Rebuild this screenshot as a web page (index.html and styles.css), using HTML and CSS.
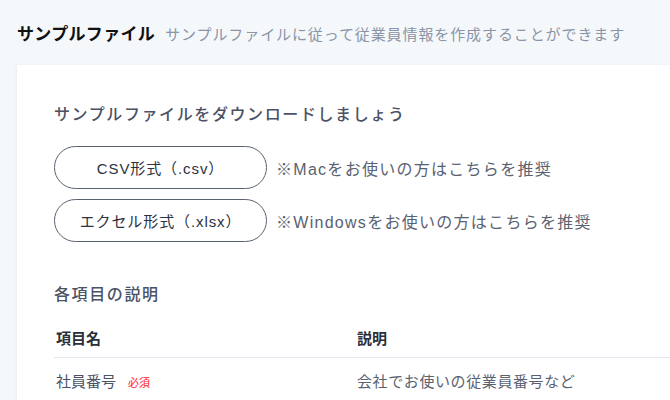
FILE: index.html
```html
<!DOCTYPE html>
<html lang="ja">
<head>
<meta charset="utf-8">
<link rel="stylesheet" href="styles.css">
</head>
<body>
<div class="page">
  <div class="page-head">
    <h1 class="title">サンプルファイル</h1>
    <span class="subtitle">サンプルファイルに従って従業員情報を作成することができます</span>
  </div>
  <div class="card">
    <h2 class="section-title">サンプルファイルをダウンロードしましょう</h2>
    <div class="dl-list">
      <div class="dl-row">
        <button class="dl-btn">CSV形式（.csv）</button>
        <span class="dl-note">※Macをお使いの方はこちらを推奨</span>
      </div>
      <div class="dl-row">
        <button class="dl-btn">エクセル形式（.xlsx）</button>
        <span class="dl-note">※Windowsをお使いの方はこちらを推奨</span>
      </div>
    </div>
    <h2 class="section-title section-title--items">各項目の説明</h2>
    <div class="table">
      <div class="tr th">
        <div class="col-name">項目名</div>
        <div class="col-desc">説明</div>
      </div>
      <div class="tr td">
        <div class="col-name">社員番号<span class="req">必須</span></div>
        <div class="col-desc">会社でお使いの従業員番号など</div>
      </div>
    </div>
  </div>
</div>
</body>
</html>
```
FILE: styles.css
```css
html, body {
  margin: 0;
  padding: 0;
  background: #f5f8fb;
  font-family: "Liberation Sans", "Noto Sans CJK JP", sans-serif;
  overflow: hidden;
}
.page {
  padding: 20px 0 0 17px;
}
.page-head {
  display: flex;
  align-items: baseline;
  gap: 10px;
  height: 30px;
}
.title {
  margin: 0;
  font-family: "Noto Sans CJK JP", sans-serif;
  font-size: 17px;
  font-weight: 700;
  color: #111;
  letter-spacing: 0.02em;
}
.subtitle {
  font-size: 15px;
  color: #8a94a6;
  letter-spacing: 0.06em;
}
.card {
  margin-top: 15px;
  background: #fff;
  padding: 36px 0 40px 37px;
  min-height: 300px;
  box-shadow: -1px 0 3px rgba(0, 0, 0, 0.04);
}
.section-title {
  margin: 0;
  font-family: "Noto Sans CJK JP", sans-serif;
  font-size: 16px;
  font-weight: 500;
  color: #4a5264;
  letter-spacing: 0.1em;
}
.dl-list {
  margin-top: 21px;
  display: flex;
  flex-direction: column;
  gap: 10px;
}
.dl-row {
  display: flex;
  align-items: center;
  gap: 9px;
}
.dl-btn {
  width: 213px;
  height: 43px;
  border: 1px solid #5a6272;
  border-radius: 22px;
  background: #fff;
  font-family: inherit;
  font-size: 15px;
  color: #2c3240;
  letter-spacing: 0.06em;
  padding: 0;
}
.dl-note {
  font-size: 16px;
  color: #5a6272;
  letter-spacing: 0.08em;
}
.section-title--items {
  margin-top: 39px;
}
.table {
  margin-top: 12px;
}
.tr {
  display: flex;
  align-items: center;
}
.th {
  height: 40px;
  font-weight: 700;
  color: #2a2f3a;
  font-size: 15px;
  border-bottom: 1px solid #e2e8f0;
}
.td {
  height: 44px;
  font-size: 15px;
  color: #4a5264;
}
.col-name {
  width: 301px;
  padding-left: 2px;
}
.col-desc {
  flex: 1;
}
.td .col-desc {
  color: #5a6272;
  letter-spacing: 0.04em;
}
.req {
  margin-left: 12px;
  font-size: 11px;
  color: #ff1a1a;
}
```
